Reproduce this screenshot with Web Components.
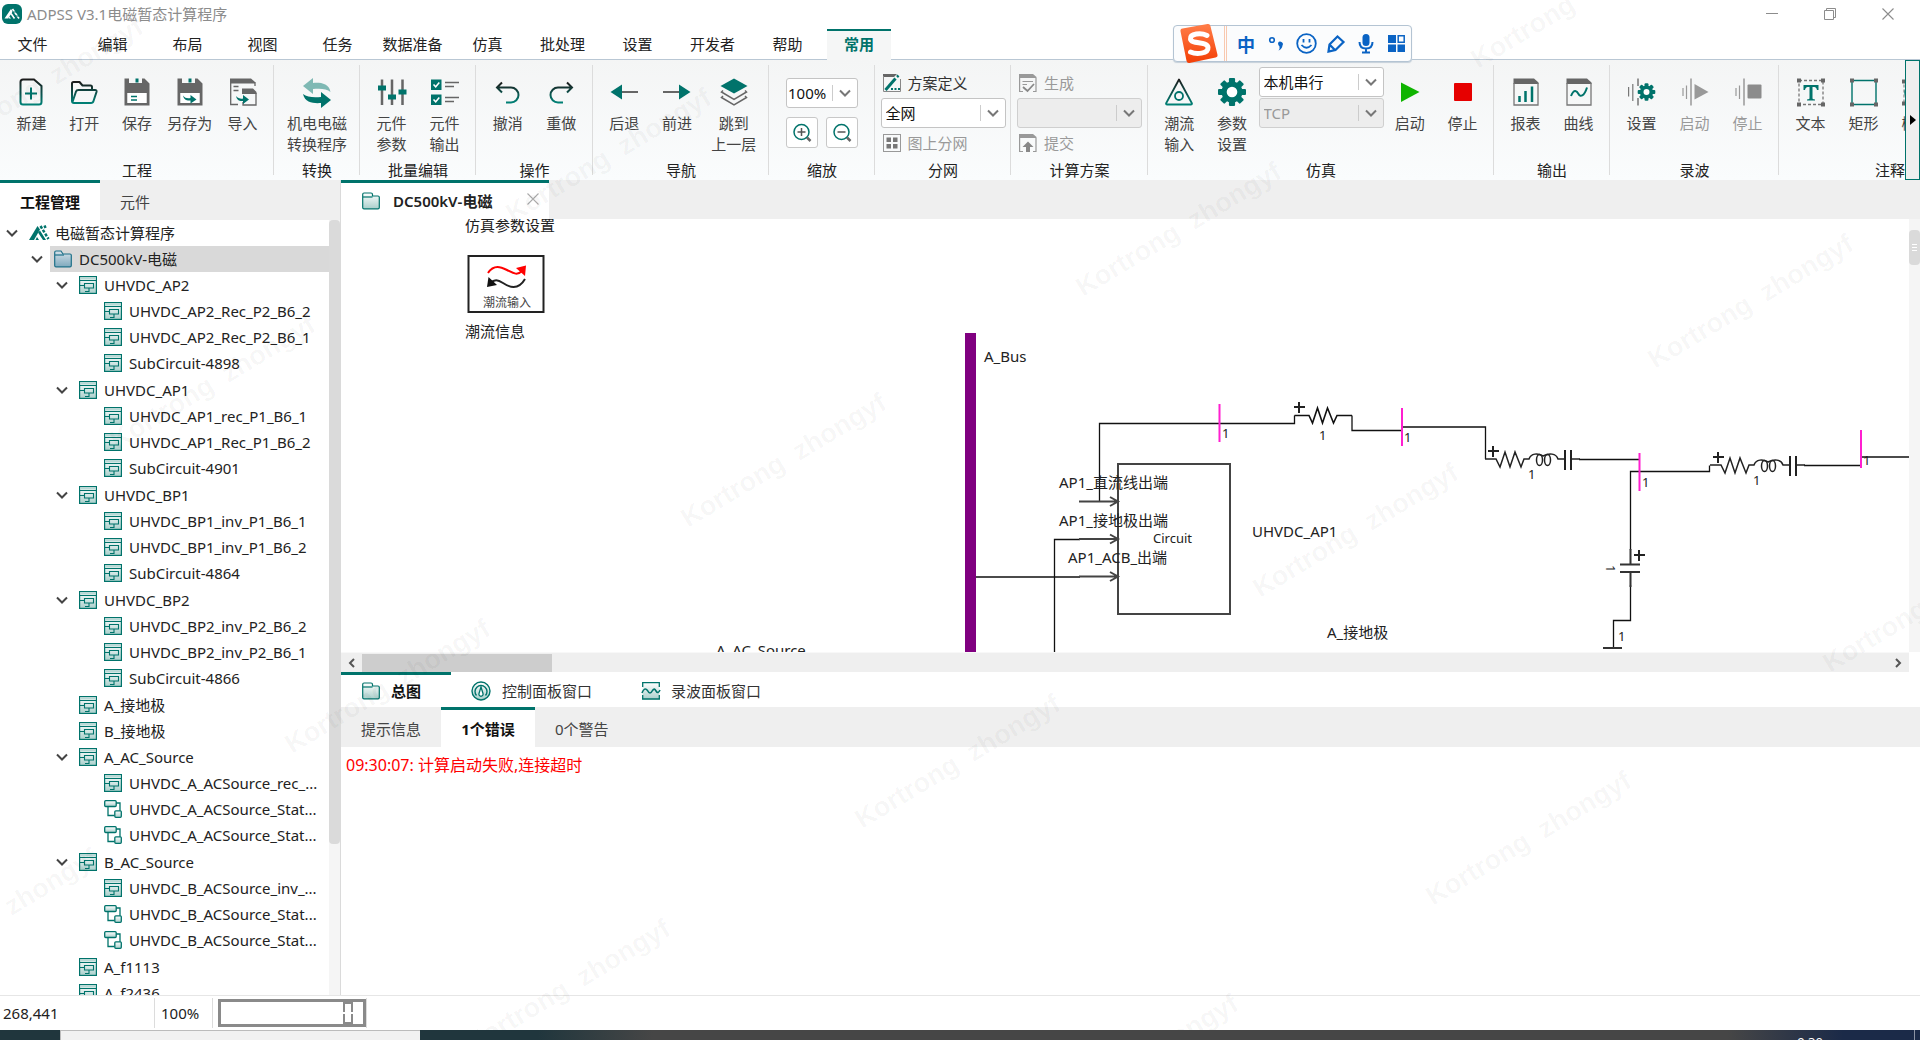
<!DOCTYPE html>
<html lang="zh-CN">
<head>
<meta charset="utf-8">
<title>ADPSS V3.1电磁暂态计算程序</title>
<style>
html,body{margin:0;height:100%;overflow:hidden;background:#fff}
body{font:15px/20px "Noto Sans","Noto Sans CJK SC",sans-serif;color:#222}
</style>
</head>
<body>
<app-window></app-window>
<script>
const BASE = `
*{box-sizing:border-box}
button{font:inherit;color:inherit;background:none;border:0;padding:0;margin:0;cursor:default}
`;
function define(name, css, html, setup) {
  const tpl = document.createElement('template');
  customElements.define(name, class extends HTMLElement {
    connectedCallback() {
      if (this.shadowRoot) return;
      tpl.innerHTML = `<style>${BASE}${css}</style>${typeof html === 'function' ? html(this) : html}`;
      this.attachShadow({mode: 'open'}).append(tpl.content.cloneNode(true));
      if (setup) setup(this);
    }
  });
}

/* ---------- icons ---------- */
const T = '#00736b', G = '#666';
const GRAD = `<defs><linearGradient id="s" x1="0" y1="0" x2="0" y2="1"><stop offset="0" stop-color="#1c1c1c"/><stop offset="1" stop-color="#008075"/></linearGradient><linearGradient id="f" x1="0" y1="0" x2="0" y2="1"><stop offset="0" stop-color="#fff"/><stop offset="1" stop-color="#a9cfcb"/></linearGradient><linearGradient id="b" x1="0" y1="0" x2="0" y2="1"><stop offset="0" stop-color="#d6e2ea"/><stop offset="1" stop-color="#7fa9bd"/></linearGradient></defs>`;
const floppy = `<path fill="${G}" fill-rule="evenodd" d="M1.500 .5H6V5H19V.5H21.500L26.500 5.500V27.500H1.500ZM4.500 15V25H23.500V15Z"/><path fill="#fff" d="M4.500 15H23.500V25H4.500Z"/><rect x="12.500" y=".5" width="3" height="4" fill="${T}"/>`;
const bars = c => `<path stroke="${c}" stroke-width="1.200" fill="none" d="M2 10V18M5.500 7.500V21"/><path stroke="${c}" stroke-width="1.500" d="M10 .5V27.500"/>`;
const gear = (cx, cy, r, c, hole) => {
  let p = '';
  for (let i = 0; i < 8; i++) p += `<rect x="${cx - r * .22}" y="${cy - r}" width="${r * .44}" height="${r}" rx="1" fill="${c}" transform="rotate(${i * 45} ${cx} ${cy})"/>`;
  return `${p}<circle cx="${cx}" cy="${cy}" r="${(r * .74 + r * hole) / 2}" fill="none" stroke="${c}" stroke-width="${r * .76 - r * hole}"/><circle cx="${cx}" cy="${cy}" r="${r * hole}" fill="#fff"/>`;
};
const handles = pts => pts.map(([x, y]) => `<rect x="${x - 2}" y="${y - 2}" width="4" height="4" fill="${G}"/>`).join('');
const ICONS = {
  new: [28, `<path fill="none" stroke="url(#s)" stroke-width="2" d="M6 1.500H17L24.500 8V24a2.500 2.500 0 0 1-2.500 2.500H6A2.500 2.500 0 0 1 3.500 24V4A2.500 2.500 0 0 1 6 1.500Z"/><path stroke="${T}" stroke-width="2" d="M14 9.500V21.500M8 15.500H20"/>`],
  open: [28, `<path fill="none" stroke="url(#s)" stroke-width="2" stroke-linejoin="round" d="M2 23V5.500Q2 4 3.500 4H9.500L12.500 7.500H20.500Q22 7.500 22 9V12M2 23Q2 25 4 25H21Q23 25 23.500 23L26.500 14Q27 12 25 12H8.500Q6.500 12 6 13.500L2.500 24"/>`],
  save: [28, floppy + `<path stroke="${T}" stroke-width="1.500" d="M8 18.500H14M8 22H14"/>`],
  saveas: [28, floppy + `<path fill="${T}" d="M7 17.500C9 20.500 12 20.500 14.500 20V17L20.500 21.500L14.500 25.500V22.500C11 23 8 22 7 17.500Z"/>`],
  import: [28, `<path fill="${G}" d="M1 .5H22L26 4V5.500H1Z"/><path fill="none" stroke="${G}" stroke-width="1.300" d="M1.700 5V26.500H9M26 4V8"/><path fill="${G}" d="M13 10.500H24L27.500 14V16H13Z"/><path fill="none" stroke="${G}" stroke-width="1.300" d="M27 15V27H14V24M4.500 8.500H9.500M4.500 12.500H9.500"/><path fill="${T}" d="M7 18C9 20.500 12 21 14 20.500V17L20 21.500L14 26V23C11 23.500 8 22.500 7 18Z"/>`],
  convert: [30, `<path fill="#7fb9b4" d="M1 8L11 0V5C18 4.500 27 5 28.500 14C25 10.500 18 10.500 11 11V16Z"/><path fill="${T}" d="M29 22L19 30V25C12 25.500 3 25 1 16C5 19.500 12 19.500 19 19V14Z"/>`],
  sliders: [28, `<path stroke="${G}" stroke-width="2.500" d="M4 1.500V27M14 1.500V27M24.500 1.500V27"/><path fill="${T}" d="M0 7.500H8V12.500H0ZM10 16.500H18V21.500H10ZM20.500 11.500H28.500V16.500H20.500Z"/>`],
  checks: [28, `<path fill="${T}" d="M0 1.500H10.500V12H0ZM0 16.500H10.500V27H0Z"/><path fill="none" stroke="#fff" stroke-width="1.500" d="M2.500 6.500L4.700 8.800L8.300 4.500M2.500 21.500L4.700 23.800L8.300 19.500"/><path stroke="${G}" stroke-width="1.500" d="M14 4.500H28M14 8.500H23M14 19.500H28M14 23.500H23"/>`],
  undo: [28, `<path fill="none" stroke="url(#s)" stroke-width="2" d="M8 4.500L3 9.500L8 14.500M3 9.500H17A7.500 7.500 0 0 1 17 24.500H12"/>`],
  redo: [28, `<path fill="none" stroke="url(#s)" stroke-width="2" d="M20 4.500L25 9.500L20 14.500M25 9.500H11A7.500 7.500 0 0 0 11 24.500H16"/>`],
  back: [28, `<path fill="${T}" d="M.5 14L12 6.500V21.500Z"/><path stroke="${G}" stroke-width="2" d="M12 14H28"/>`],
  forward: [28, `<path fill="${T}" d="M27.500 14L16 6.500V21.500Z"/><path stroke="${G}" stroke-width="2" d="M0 14H16"/>`],
  layers: [28, `<path fill="${T}" d="M14 .5L27.500 8L14 15.500L.5 8Z"/><path fill="none" stroke="${G}" stroke-width="1.500" d="M3 12.500L1.500 14L14 21.500L26.500 14L25 12.500M3 18L1.500 19.500L14 27L26.500 19.500L25 18"/>`],
  zoomin: [20, `<circle cx="9.500" cy="9" r="7.500" fill="none" stroke="${T}" stroke-width="1.500"/><path stroke="#555" stroke-width="1.500" d="M9.500 5V13M5.500 9H13.500"/><path stroke="${G}" stroke-width="2.500" d="M15 14.500L18.500 18"/>`],
  zoomout: [20, `<circle cx="9.500" cy="9" r="7.500" fill="none" stroke="${T}" stroke-width="1.500"/><path stroke="#555" stroke-width="1.500" d="M5.500 9H13.500"/><path stroke="${G}" stroke-width="2.500" d="M15 14.500L18.500 18"/>`],
  plan: [18, `<path fill="${G}" d="M0 0H14L11 3H0Z"/><path fill="none" stroke="#888" d="M.5 2V17.500H17.500V5"/><path stroke="${T}" stroke-width="3" d="M2.500 16L12.500 4.500"/><path stroke="${T}" stroke-width="2.500" d="M14 3L15.500 1.500"/><path stroke="${T}" stroke-width="1.800" stroke-dasharray="2 1.500" d="M8 15H17"/>`],
  grid: [18, `<rect x=".5" y=".5" width="17" height="17" fill="none" stroke="#999"/><path fill="#777" d="M3.500 3.500H8V8H3.500ZM10 3.500H14.500V8H10ZM3.500 10H8V14.500H3.500ZM10 10H14.500V14.500H10Z"/>`],
  gen: [18, `<path fill="#999" d="M0 0H14L17.500 3V4H0Z"/><path fill="none" stroke="#999" stroke-width="1.200" d="M.6 3V17.500H4M17 4V17.500H14M3.500 7.500H14M3.500 10.500H8"/><path fill="none" stroke="#888" stroke-width="1.800" d="M4 13L8.500 17L15 10"/>`],
  submit: [18, `<path fill="#999" d="M0 0H14L17.500 3V4H0Z"/><path fill="none" stroke="#999" stroke-width="1.200" d="M.6 3V17.500H4M17 4V17.500H14"/><path fill="#888" d="M9 7.500L14.500 13H11V18H7V13H3.500Z"/>`],
  flow: [28, `<path fill="none" stroke="url(#s)" stroke-width="1.800" stroke-linejoin="round" d="M14 1.500L27 25.500Q27 26.500 26 26.500H2Q1 26.500 1 25.500Z"/><circle cx="14" cy="18" r="4" fill="none" stroke="${T}" stroke-width="1.800"/>`],
  gear: [28, gear(14, 14, 14, T, .38)],
  play: [28, `<path fill="#0fb400" d="M5 4.500L23.500 14L5 24Z"/>`],
  stop: [28, `<rect x="5" y="5" width="18" height="18" rx="1" fill="#e60000"/>`],
  report: [28, `<path fill="${G}" d="M1.500 .5H22L26.500 4.500V6H1.500Z"/><path fill="none" stroke="#777" stroke-width="1.300" d="M2 5V27H26V5"/><path stroke="${T}" stroke-width="2.500" d="M7.500 18V24M13.500 13V24M20 8.500V24"/>`],
  curve: [28, `<path fill="${G}" d="M1.500 .5H22L26.500 4.500V6H1.500Z"/><path fill="none" stroke="#777" stroke-width="1.300" d="M2 5V27H26V5"/><path fill="none" stroke="${T}" stroke-width="2" d="M6 18C9 10.500 12 13 13.500 16S19 19 22 9.500"/>`],
  recset: [28, `<path stroke="#777" stroke-width="1.200" d="M.6 9V18.500M4.800 6V23"/><path stroke="#777" stroke-width="1.500" d="M10 .5V8M10 20V27.500"/>` + gear(18.500, 14, 8.800, T, .34)],
  recplay: [28, bars('#999') + `<path fill="#999" d="M13.500 6L27.500 14L13.500 21.500Z"/>`],
  recstop: [28, bars('#999') + `<rect x="13.500" y="6.500" width="14" height="14" rx="1" fill="#8c8c8c"/>`],
  text: [28, `<path fill="none" stroke="#777" stroke-width="1.300" stroke-dasharray="3 2" d="M2 2.500H26V26.500H2Z"/><path fill="${T}" d="M6.500 7H21.500V12H20C19.500 9.500 18.500 9 15.500 9V20C15.500 21 16 21.300 18 21.500V22.500H10V21.500C12 21.300 12.500 21 12.500 20V9C9.500 9 8.500 9.500 8 12H6.500Z"/>` + handles([[2, 2.5], [26, 2.5], [2, 26.5], [26, 26.5]])],
  rect: [28, `<path fill="none" stroke="${T}" stroke-width="1.400" d="M2 2.500H26V26.500H2Z"/>` + handles([[2, 2.5], [26, 2.5], [2, 26.5], [26, 26.5]])],
  ellipse: [28, `<path fill="none" stroke="#777" stroke-dasharray="3 2" d="M1 3.500H27V25.500H1Z"/><ellipse cx="14" cy="14.500" rx="12" ry="10" fill="none" stroke="${T}" stroke-width="1.400"/>` + handles([[1, 3.5], [27, 3.5], [1, 25.5], [27, 25.5]])],
  chevron: [12, `<path fill="none" stroke="currentColor" stroke-width="2" d="M1 3.500L6 8.500L11 3.500"/>`],
  root: [20, `<path fill="${T}" d="M0 17L8.500 3L11 6.500L5 17Z"/><path fill="${T}" d="M9 9.500L14 17H17L11 7.500ZM8 14L10 17H6.500Z"/><path stroke="${T}" stroke-width="2.500" stroke-dasharray="3 1.500" d="M11.500 3L19.500 16M15.500 2.500L16.500 5"/>`],
  folder: [18, `<path fill="url(#f)" stroke="${T}" stroke-width="1.200" d="M.7 15.500V2.500Q.7 1 2 1H9Q10.500 1 10.500 2.500V4H16Q17.300 4 17.300 5.300V15.500Q17.300 16.800 16 16.800H2Q.7 16.800 .7 15.500Z"/><path stroke="${T}" stroke-width="1.200" d="M1 5H10.500"/>`],
  bluefolder: [18, `<path fill="url(#b)" stroke="#1d7089" stroke-width="1.200" d="M.7 15.500V2.500Q.7 1 2 1H7L9 4H16Q17.300 4 17.300 5.300V15.500Q17.300 16.800 16 16.800H2Q.7 16.800 .7 15.500Z"/><path stroke="#1d7089" stroke-width="1.200" d="M1 5H10"/>`],
  circuit: [18, `<rect x=".6" y=".6" width="16.800" height="16.800" fill="url(#f)" stroke="${T}" stroke-width="1.200"/><path fill="#b9d8d5" d="M1.200 1.200H16.800V3.500H1.200Z"/><path fill="none" stroke="${T}" stroke-width="1.100" d="M1 4.500H17M5.500 7.500H14.500V12H5.500ZM1 9.500H5.500M10 12V15.500H6"/>`],
  linked: [18, `<path fill="none" stroke="${T}" stroke-width="1.300" d="M4 6.500V15.500H10.500M12 3H16V11"/><rect x=".7" y=".7" width="11.500" height="5.800" rx="1" fill="url(#f)" stroke="${T}" stroke-width="1.300"/><rect x="10.800" y="10.800" width="6.500" height="6.500" rx="1" fill="url(#f)" stroke="${T}" stroke-width="1.300"/>`],
  gauge: [20, `<circle cx="10" cy="10" r="9" fill="url(#f)" stroke="${T}" stroke-width="1.400"/><path fill="none" stroke="${T}" stroke-width="1.400" d="M5.500 14.500A6 6 0 1 1 14.500 14.500"/><path fill="#fff" stroke="${T}" stroke-width="1.300" d="M10 6L12 12.500A2.100 2.100 0 1 1 8 12.500Z"/>`],
  wave: [18, `<rect x=".7" y=".7" width="16.600" height="16.600" fill="url(#f)"/><path fill="none" stroke="${T}" stroke-width="1.300" d="M.7 5V.7H17.300V5M0 17H18M.7 13V17M17.300 13V17"/><path fill="none" stroke="${T}" stroke-width="1.600" d="M0 11Q2.500 4.500 5.500 8.500Q8 13.500 10.500 8.500Q12.500 5.500 14 9Q16 12.500 18 8"/>`],
  close: [12, `<path stroke="currentColor" stroke-width="1.100" d="M.5 .5L11.500 11.500M11.500 .5L.5 11.500"/>`],
  min: [12, `<path stroke="currentColor" d="M0 5.500H12"/>`],
  restore: [12, `<path fill="none" stroke="currentColor" d="M.5 2.500H9.500V11.500H.5ZM2.500 2.500V.5H11.500V9.500H9.500"/>`],
  logo: [20, `<rect width="20" height="20" rx="6" fill="${T}"/><path fill="#fff" d="M2.500 14.500L9 5L10.800 7.500L6 14.500ZM7.500 12.500L9 14.500H6.500Z"/><path stroke="#fff" stroke-width="1.600" d="M10.500 5L17 14.500M9 9.500L12.500 14.500"/><path stroke="${T}" stroke-width="1" d="M10 8H15M12 12H17"/>`],
};
define('app-icon', `:host{display:block;flex:none}svg{display:block;overflow:visible}`, el => {
  const [s, body] = ICONS[el.getAttribute('name')];
  return `<svg width="${s}" height="${s}" viewBox="0 0 ${s} ${s}" aria-hidden="true">${GRAD}${body}</svg>`;
});

/* ---------- small controls ---------- */
define('combo-box', `
:host{display:block}
label{display:grid;height:30px;background:#fff;border:1px solid #c4c4c4;border-radius:3px;align-items:center}
:host([disabled]) label{background:#ededed;border-color:#cfcfcf}
select,.mark{grid-area:1/1}
select{appearance:none;border:0;background:none;font:inherit;color:#111;padding:0 0 0 4px;margin:0;height:28px;width:100%;opacity:1}
:host([tight]) select{padding-left:1px}
:host([disabled]) select{color:#999}
.mark{justify-self:end;display:flex;align-items:center;justify-content:center;height:16px;width:25px;border-left:1px solid #ccc;color:#777;pointer-events:none}
`, el => `<label aria-label="${el.getAttribute('label')}"><select ${el.hasAttribute('disabled') ? 'disabled' : ''}><option>${el.getAttribute('value') || ''}</option></select><span class="mark"><app-icon name="chevron"></app-icon></span></label>`);

define('ribbon-button', `
:host{display:block;flex:1 1 52px;min-width:0}
:host([wide]){flex-basis:60px}
:host([fixed]){flex:none;width:53px}
button{display:flex;flex-direction:column;align-items:center;width:100%;padding-top:18px;color:#444;line-height:21px;white-space:nowrap}
.i{height:35px;display:flex;align-items:flex-start}
:host([disabled]) button{color:#999}
`, el => `<button ${el.hasAttribute('disabled') ? 'disabled' : ''}><span class="i"><app-icon name="${el.getAttribute('icon')}"></app-icon></span><span><slot></slot></span></button>`);

define('ribbon-line', `
:host{display:block}
button{display:flex;align-items:center;gap:7px;height:30px;padding-left:2px;color:#333}
:host([disabled]) button{color:#999}
`, el => `<button ${el.hasAttribute('disabled') ? 'disabled' : ''}><app-icon name="${el.getAttribute('icon')}"></app-icon><span><slot></slot></span></button>`);

define('ribbon-group', `
:host{display:flex;flex-direction:column;flex:none;width:var(--w);height:120px;
background:linear-gradient(#dcdcdc,#dcdcdc) right 5px/1px 110px no-repeat}
.body{flex:1;display:flex;align-items:flex-start;padding:0 5px}
.name{line-height:19px;text-align:center;color:#222}
`, el => `<div class="body"><slot></slot></div><div class="name">${el.getAttribute('name')}</div>`);

/* ---------- top ---------- */
define('title-bar', `
:host{display:flex;align-items:center;height:28px;padding:0 3px 0 2px;color:#8c8c8c}
h1{font:inherit;margin:0 auto 0 5px}
button{width:58px;height:28px;display:grid;place-items:center}
`, `<app-icon name="logo"></app-icon><h1>ADPSS V3.1电磁暂态计算程序</h1>
<button aria-label="最小化"><app-icon name="min"></app-icon></button><button aria-label="还原"><app-icon name="restore"></app-icon></button><button aria-label="关闭"><app-icon name="close"></app-icon></button>`);

define('menu-tabs', `
:host{display:block}
nav{display:flex;height:32px;padding-top:1px;box-shadow:inset 0 -1px #b9c7d4}
button{width:75px;height:31px;padding-bottom:2px}
button:first-child{width:65px;margin-right:10px}
button.on{width:64px;margin-left:2px;background:#f5f6f6;border-top:2px solid #00736b;color:#00736b;font-weight:600;padding-bottom:4px}
`, `<nav>${['文件', '编辑', '布局', '视图', '任务', '数据准备', '仿真', '批处理', '设置', '开发者', '帮助'].map(t => `<button>${t}</button>`).join('')}<button class="on">常用</button></nav>`);

define('ribbon-bar', `
:host{display:flex;height:120px;background:linear-gradient(#f4f5f5,#fafcfd)}
.groups{display:flex;flex:1;min-width:0;overflow:hidden}
.col{display:flex;flex-direction:column;width:125px;margin:0 auto;padding-top:8px}
.col.sim{flex:none;padding-top:7px;gap:1px;margin:0}
.zoom{display:grid;grid-template-columns:32px 32px;gap:9px 8px;margin:0 auto;padding-top:18px}
.zoom combo-box{grid-column:1/3}
.zoom button{height:31px;display:grid;place-items:center;background:#fff;border:1px solid #c8c8c8;border-radius:3px}
.more{flex:none;width:15px;border:1px solid #00736b;background:#efefef;display:grid;place-items:center}
`, `<div class="groups">
<ribbon-group name="工程" style="--w:274px"><ribbon-button icon="new">新建</ribbon-button><ribbon-button icon="open">打开</ribbon-button><ribbon-button icon="save">保存</ribbon-button><ribbon-button icon="saveas">另存为</ribbon-button><ribbon-button icon="import">导入</ribbon-button></ribbon-group>
<ribbon-group name="转换" style="--w:86px"><ribbon-button icon="convert">机电电磁<br>转换程序</ribbon-button></ribbon-group>
<ribbon-group name="批量编辑" style="--w:116px"><ribbon-button icon="sliders">元件<br>参数</ribbon-button><ribbon-button icon="checks">元件<br>输出</ribbon-button></ribbon-group>
<ribbon-group name="操作" style="--w:117px"><ribbon-button icon="undo">撤消</ribbon-button><ribbon-button icon="redo">重做</ribbon-button></ribbon-group>
<ribbon-group name="导航" style="--w:176px"><ribbon-button icon="back">后退</ribbon-button><ribbon-button icon="forward">前进</ribbon-button><ribbon-button wide icon="layers">跳到<br>上一层</ribbon-button></ribbon-group>
<ribbon-group name="缩放" style="--w:106px"><div class="zoom"><combo-box tight label="缩放比例" value="100%"></combo-box><button aria-label="放大"><app-icon name="zoomin"></app-icon></button><button aria-label="缩小"><app-icon name="zoomout"></app-icon></button></div></ribbon-group>
<ribbon-group name="分网" style="--w:136px"><div class="col"><ribbon-line icon="plan">方案定义</ribbon-line><combo-box label="分网范围" value="全网"></combo-box><ribbon-line disabled icon="grid">图上分网</ribbon-line></div></ribbon-group>
<ribbon-group name="计算方案" style="--w:137px"><div class="col"><ribbon-line disabled icon="gen">生成</ribbon-line><combo-box disabled label="计算方案"></combo-box><ribbon-line disabled icon="submit">提交</ribbon-line></div></ribbon-group>
<ribbon-group name="仿真" style="--w:346px"><ribbon-button icon="flow">潮流<br>输入</ribbon-button><ribbon-button icon="gear">参数<br>设置</ribbon-button><div class="col sim"><combo-box label="运行方式" value="本机串行"></combo-box><combo-box disabled label="通信协议" value="TCP"></combo-box></div><ribbon-button icon="play">启动</ribbon-button><ribbon-button icon="stop">停止</ribbon-button></ribbon-group>
<ribbon-group name="输出" style="--w:116px"><ribbon-button icon="report">报表</ribbon-button><ribbon-button icon="curve">曲线</ribbon-button></ribbon-group>
<ribbon-group name="录波" style="--w:169px"><ribbon-button icon="recset">设置</ribbon-button><ribbon-button disabled icon="recplay">启动</ribbon-button><ribbon-button disabled icon="recstop">停止</ribbon-button></ribbon-group>
<ribbon-group name="注释" style="--w:222px"><ribbon-button fixed icon="text">文本</ribbon-button><ribbon-button fixed icon="rect">矩形</ribbon-button><ribbon-button fixed icon="ellipse">椭圆</ribbon-button></ribbon-group>
</div><button class="more" aria-label="更多"><svg width="6" height="10"><path d="M0 0L6 5L0 10Z"/></svg></button>`);

/* ---------- project tree ---------- */
const TREE = ['root', '电磁暂态计算程序', [
  ['bluefolder', 'DC500kV-电磁', [
    ['circuit', 'UHVDC_AP2', [['circuit', 'UHVDC_AP2_Rec_P2_B6_2'], ['circuit', 'UHVDC_AP2_Rec_P2_B6_1'], ['circuit', 'SubCircuit-4898']]],
    ['circuit', 'UHVDC_AP1', [['circuit', 'UHVDC_AP1_rec_P1_B6_1'], ['circuit', 'UHVDC_AP1_Rec_P1_B6_2'], ['circuit', 'SubCircuit-4901']]],
    ['circuit', 'UHVDC_BP1', [['circuit', 'UHVDC_BP1_inv_P1_B6_1'], ['circuit', 'UHVDC_BP1_inv_P1_B6_2'], ['circuit', 'SubCircuit-4864']]],
    ['circuit', 'UHVDC_BP2', [['circuit', 'UHVDC_BP2_inv_P2_B6_2'], ['circuit', 'UHVDC_BP2_inv_P2_B6_1'], ['circuit', 'SubCircuit-4866']]],
    ['circuit', 'A_接地极'], ['circuit', 'B_接地极'],
    ['circuit', 'A_AC_Source', [['circuit', 'UHVDC_A_ACSource_rec_...'], ['linked', 'UHVDC_A_ACSource_Stat...'], ['linked', 'UHVDC_A_ACSource_Stat...']]],
    ['circuit', 'B_AC_Source', [['circuit', 'UHVDC_B_ACSource_inv_...'], ['linked', 'UHVDC_B_ACSource_Stat...'], ['linked', 'UHVDC_B_ACSource_Stat...']]],
    ['circuit', 'A_f1113'], ['circuit', 'A_f2436'],
  ]],
]];
const node = ([icon, text, kids]) => `<li role="treeitem" ${kids ? 'aria-expanded="true"' : ''}><div class="row"><span class="tw">${kids ? '<app-icon name="chevron"></app-icon>' : ''}</span><div class="cell ${icon}"><app-icon name="${icon}"></app-icon><span>${text}</span></div></div>${kids ? `<ul role="group">${kids.map(node).join('')}</ul>` : ''}</li>`;
define('project-tree', `
:host{display:flex;flex:1;min-height:0;overflow:hidden}
.list{flex:1;min-width:0;overflow:hidden}
ul{list-style:none;margin:0;padding:0 0 1px}
ul ul{padding-left:25px}
.row{display:flex;height:26px}
.tw{width:25px;flex:none;display:grid;place-items:center;color:#444;padding-right:2px}
.cell{flex:1;min-width:0;display:flex;align-items:center;gap:7px;padding-left:4px;white-space:nowrap;overflow:hidden}
.cell.root{gap:6px}
.cell.bluefolder{background:#d9d9d9}
.bar{flex:none;width:11px;background:#f5f5f5}
.bar i{display:block;height:624px;background:#dadada;border-radius:4px}
`, `<div class="list"><ul role="tree">${node(TREE)}</ul></div><div class="bar"><i></i></div>`);

define('side-panel', `
:host{display:flex;flex-direction:column;flex:none;width:341px;border-right:1px solid #dadada;min-height:0}
.tabs{display:flex;height:40px;background:#efefef;flex:none;color:#444}
button{width:100px;padding-top:3px}
button+button{width:60px;margin-left:5px}
.on{background:#fff;border-top:3px solid #00736b;color:#111;font-weight:700;padding:0}
`, `<div class="tabs"><button class="on">工程管理</button><button>元件</button></div><project-tree></project-tree>`);

/* ---------- circuit ---------- */
const plus = (x, y) => `<path stroke="#222" stroke-width="2" d="M${x - 5} ${y}H${x + 6}M${x} ${y - 5}V${y + 6}"/>`;
const RLC = `<g fill="none" stroke="#222" stroke-width="1.500"><path d="M1485 459H1496L1500 467L1505 452L1510 467L1515 452L1521 467L1524 459H1529C1531 453 1538 453 1543 456C1549 453 1556 453 1558 459H1565M1571 459H1580"/><ellipse cx="1539.500" cy="460" rx="3" ry="5.500"/><ellipse cx="1547.500" cy="460" rx="3" ry="5.500"/><path stroke-width="2" d="M1565 450V470M1571 450V470"/></g>${plus(1493, 451)}<text class="s" x="1528" y="479">1</text>`;
define('circuit-canvas', `
:host{display:block;flex:1;min-width:0;overflow:hidden}
svg{display:block;width:100%;height:100%}
text{font:15px "Noto Sans","Noto Sans CJK SC",sans-serif;fill:#222}
text.s{font-size:13px}
text.serif{font:12px "Liberation Serif","Noto Sans CJK SC",serif;fill:#444}
`, `<svg role="img" aria-label="DC500kV 电磁主接线图"><g transform="translate(-341 -219)">
<text x="465" y="231">仿真参数设置</text>
<rect x="468.500" y="256" width="75" height="56" fill="#fff" stroke="#222" stroke-width="2"/>
<path fill="none" stroke="#f00" stroke-width="2" d="M488 273C494 264 501 267 507 270S517 276 522 271"/><path fill="#f00" d="M516 268L526 265.500L525 276Z"/>
<path fill="none" stroke="#222" stroke-width="2" d="M525 279C518 291 509 287 503 283S495 280 491 282"/><path fill="#111" d="M488.500 277L487 287L497 285Z"/>
<text class="serif" x="483" y="307">潮流输入</text>
<text x="465" y="337">潮流信息</text>
<text x="716" y="656">A_AC_Source</text>
<rect x="965" y="333" width="11" height="400" fill="#800080"/>
<text x="984" y="362">A_Bus</text>
<g fill="none" stroke="#111" stroke-width="1.300">
<path d="M1099.500 501V423.500H1294.500V415.500M1352 415.500V430.500H1402M1402 427H1485.500V459M1579 459.500H1640M1630.500 550V471.500H1709.500V465.500M1804 465.500H1861M1861 457H1909V457H2200M1630.500 585V620.500H1613.500V648M1080 539.500H1054.500V800M976 577H1080"/>
<path stroke-width="1.600" d="M1294.500 415.500H1309L1312.500 423L1317.500 408L1322.500 423L1327.500 408L1333.500 423L1337 415.500H1352"/>
<path stroke-width="2" stroke="#333" d="M1630.500 549V564M1620 564.500H1640M1620 572H1640M1630.500 572V587M1603 648H1622"/>
</g>
<g fill="none" stroke="#444" stroke-width="2"><rect x="1118" y="464" width="112" height="150"/>
<path d="M1079 501.500H1117M1110 497L1118 501.500L1110 506M1079 539H1117M1110 534.500L1118 539L1110 543.500M1079 576.500H1117M1110 572L1118 576.500L1110 581"/></g>
<path stroke="#ff1fd0" stroke-width="2" d="M1219.500 404V442M1402 408V446M1639.500 453V491M1861 430V468"/>
${plus(1299, 407)}${plus(1639, 555)}
${RLC}<g transform="translate(225 6)">${RLC}</g>
<text x="1059" y="488">AP1_直流线出端</text><text x="1059" y="526">AP1_接地极出端</text><text x="1068" y="563">AP1_ACB_出端</text>
<text class="s" x="1153" y="543">Circuit</text><text x="1252" y="537">UHVDC_AP1</text><text x="1327" y="638">A_接地极</text>
<text class="s" x="1222" y="438">1</text><text class="s" x="1319" y="440">1</text><text class="s" x="1404" y="442">1</text><text class="s" x="1642" y="487">1</text><text class="s" x="1863" y="465">1</text><text class="s" x="1618" y="641">1</text>
<text class="s" transform="translate(1606 565) rotate(90)">1</text>
</g></svg>`);

define('work-area', `
:host{display:flex;flex-direction:column;flex:1;min-width:0;min-height:0}
.top{flex:none;display:flex;height:39px;background:#efefef}
.doc{display:flex;align-items:center;width:208px;background:#fff;border-top:3px solid #00736b;padding:0 10px 0 21px;gap:13px;color:#222}
.doc b{margin-right:auto;font-weight:600}
.doc button{color:#aaa;padding:0 0 4px}
.mid{flex:433 1 0;min-height:0;display:flex}
.v{flex:none;width:11px;background:#f5f5f5;padding-top:11px}
.v i{display:grid;place-items:center;height:35px;border-radius:4px;background:#dadada}
.h{flex:none;display:flex;align-items:center;height:20px;background:#efefef;margin-right:11px;color:#555;border-top:1px solid #f8f8f8}
.h button{width:21px;display:grid;place-items:center}
.h i{flex:1;height:18px;background:linear-gradient(#cdcdcd,#cdcdcd) 0 0/190px 100% no-repeat}
.views{flex:none;display:flex;height:35px}
.views button{display:flex;align-items:center;padding:2px 30px 0 20px;gap:11px;color:#333}
.views .on{width:110px;border-top:3px solid #00736b;font-weight:700;color:#111;padding:0 0 0 21px}
.msgs{flex:none;display:flex;height:40px;background:#efefef;color:#444}
.msgs button{padding:3px 20px 0}
.msgs .on{width:94px;background:#fff;border-top:3px solid #00736b;font-weight:700;color:#111;padding:0}
.log{flex:248 1 0;min-height:0;overflow:hidden;color:#f00;font-size:16px}
.log p{margin:8px 5px}
`, `<div class="top"><div class="doc"><app-icon name="folder"></app-icon><b>DC500kV-电磁</b><button aria-label="关闭标签"><app-icon name="close"></app-icon></button></div></div>
<div class="mid"><circuit-canvas></circuit-canvas><div class="v"><i><svg width="5" height="9"><path stroke="#fff" d="M0 1.500H5M0 4.500H5M0 7.500H5"/></svg></i></div></div>
<div class="h"><button aria-label="向左"><svg width="7" height="10"><path fill="none" stroke="currentColor" stroke-width="2" d="M6 1L2 5L6 9"/></svg></button><i></i><button aria-label="向右"><svg width="7" height="10"><path fill="none" stroke="currentColor" stroke-width="2" d="M1 1L5 5L1 9"/></svg></button></div>
<div class="views"><button class="on"><app-icon name="folder"></app-icon>总图</button><button><app-icon name="gauge"></app-icon>控制面板窗口</button><button><app-icon name="wave"></app-icon>录波面板窗口</button></div>
<div class="msgs"><button>提示信息</button><button class="on">1个错误</button><button>0个警告</button></div>
<div class="log"><p>09:30:07: 计算启动失败,连接超时</p></div>`);

/* ---------- bottom ---------- */
define('status-bar', `
:host{display:flex;align-items:center;flex:none;height:35px;border-top:1px solid #e6e6e6}
span{height:30px;line-height:30px;border-right:1px solid #dcdcdc}
.pos{width:155px;padding-left:3px}.zoom{width:58px;padding-left:6px}.box{width:154px;padding:1px 0 1px 5px}
.box div{height:28px;width:148px;border:3px solid #8a8a8a;display:flex;justify-content:flex-end;padding:0 10px 0 0;align-items:center}
svg{display:block}
`, `<span class="pos">268,441</span><span class="zoom">100%</span><span class="box"><div><svg width="10" height="22"><path fill="none" stroke="#8a8a8a" stroke-width="2" d="M1 10V1H9V10M1 12V21H9V12"/></svg></div></span>`);

define('task-strip', `
:host{display:flex;flex:none;height:10px;overflow:hidden;background:linear-gradient(90deg,#20363d 0,#20363d 28%,#464646 34%,#464646 90%,#1b2a48 96%)}
.app{margin-left:60px;width:360px;background:#f1f1f1;border-top:1px solid #bbb;border-left:1px solid #bbb}
time{margin:7px 91px 0 auto;color:#fff;font:13px/10px "Noto Sans",sans-serif;height:10px}
.edge{width:6px;border-left:1px solid #8c93a3}
`, `<div class="app"></div><time>9:30</time><div class="edge"></div>`);

define('ime-bar', `
:host{position:absolute;left:1173px;top:25px;width:239px;height:37px;background:#fbfcfd;border:1px solid #b4c4d3;border-radius:4px;box-shadow:0 1px 1px #c5d0da;box-sizing:border-box;display:flex;align-items:center}
button{display:grid;place-items:center;width:30px;flex:none}
.s{width:50px}.sep{width:5px;height:35px;border:1px solid #f8c9b0;border-width:0 1px;margin-right:4px}
svg{display:block;overflow:visible}
.zh{color:#0a63c4;font:700 18px/20px "Noto Sans CJK SC",sans-serif}
`, `<button class="s" aria-label="搜狗输入法"><svg width="38" height="40" viewBox="0 0 38 40"><defs><linearGradient id="o" x1="0" y1="0" x2="0" y2="1"><stop offset="0" stop-color="#ff7a45"/><stop offset="1" stop-color="#f4430a"/></linearGradient></defs><path fill="url(#o)" stroke="url(#o)" stroke-width="5" stroke-linejoin="round" d="M3 7L28 2.500L35 31L9 36.500Z"/><path fill="none" stroke="#fff" stroke-width="5" stroke-linecap="round" d="M27 11.500C21 8.500 10 9.500 10.500 15C11 20.500 27.500 17 28 23.500C28.500 30 16 30.500 10.500 28"/></svg></button><span class="sep"></span>
<button class="zh">中</button>
<button aria-label="标点"><svg width="16" height="16"><circle cx="4" cy="4" r="2.300" fill="none" stroke="#0a63c4" stroke-width="1.600"/><path fill="#0a63c4" d="M10 7a2.500 2.500 0 1 1 4.500 2.500Q14 13 10.500 14.500Q12 12.500 11.500 10.500Q10 9.500 10 7Z"/></svg></button>
<button aria-label="表情"><svg width="21" height="21" fill="none" stroke="#0a63c4" stroke-width="1.800"><circle cx="10.500" cy="10.500" r="9.300"/><path d="M7.500 6V9.500M13.500 6V9.500M5.500 12Q10.500 17.500 15.500 12"/></svg></button>
<button aria-label="皮肤"><svg width="18" height="18" fill="none" stroke="#0a63c4" stroke-width="2.200"><path d="M1.500 16.500L2.500 9.500L10.500 1.500L16.500 7L8.500 15ZM3 10L8 15"/></svg></button>
<button aria-label="语音"><svg width="16" height="20"><rect x="4.500" width="7" height="12" rx="3.500" fill="#0a63c4"/><path fill="none" stroke="#0a63c4" stroke-width="2" d="M1.500 8Q1.500 14.500 8 14.500T14.500 8M8 14V19M4 18.500H12"/></svg></button>
<button aria-label="工具箱"><svg width="17" height="17"><path fill="#0a63c4" d="M0 0H8V8H0ZM0 9.500H8V17H0ZM9.500 9.500H17V17H9.500Z"/><path fill="none" stroke="#0a63c4" stroke-width="1.500" d="M10.200 .8H16.200V7.200H10.200Z"/></svg></button>`);

const MARKS = [[-55, 152], [513, 223], [1083, 297], [1655, 369], [1478, 69], [117, 450], [688, 528], [1260, 598], [1830, 673], [292, 754], [862, 829], [1433, 906], [-100, 983], [472, 1054], [1040, 1129]];
define('water-mark', `
:host{position:absolute;inset:0 0 10px;overflow:hidden;pointer-events:none}
svg{display:block;width:100%;height:100%}
text{font:700 27px "Liberation Sans",sans-serif;fill:#000;fill-opacity:.04}
`, `<svg aria-hidden="true">${MARKS.map(([x, y]) => `<g transform="translate(${x} ${y}) rotate(-31)"><text>Kortrong</text>${y === 69 ? '' : '<text x="130">zhongyf</text>'}</g>`).join('')}</svg>`);

define('app-window', `
:host{display:flex;flex-direction:column;height:100vh;position:relative;background:#fff}
main{flex:1;display:flex;min-height:0}
`, `<title-bar></title-bar><menu-tabs></menu-tabs><ribbon-bar></ribbon-bar><main><side-panel></side-panel><work-area></work-area></main><status-bar></status-bar><task-strip></task-strip><water-mark></water-mark><ime-bar></ime-bar>`);
</script>
</body>
</html>
